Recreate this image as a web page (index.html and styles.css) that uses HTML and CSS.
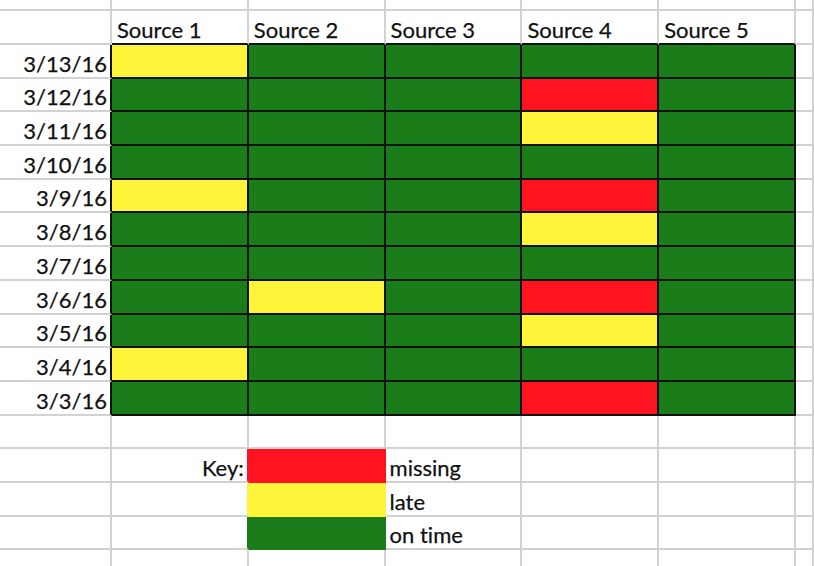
FILE: index.html
```html
<!DOCTYPE html>
<html>
<head>
<meta charset="utf-8">
<link rel="stylesheet" href="styles.css">
</head>
<body>
<div class="sheet">
  <div class="c"></div><div class="c"></div><div class="c"></div><div class="c"></div><div class="c"></div><div class="c"></div><div class="c"></div>

  <div class="c"></div>
  <div class="c hd">Source 1</div>
  <div class="c hd">Source 2</div>
  <div class="c hd">Source 3</div>
  <div class="c hd">Source 4</div>
  <div class="c hd">Source 5</div>
  <div class="c"></div>

  <div class="c dt">3/13/16</div><div class="c d y"></div><div class="c d g"></div><div class="c d g"></div><div class="c d g"></div><div class="c d g"></div><div class="c"></div>
  <div class="c dt">3/12/16</div><div class="c d g"></div><div class="c d g"></div><div class="c d g"></div><div class="c d r"></div><div class="c d g"></div><div class="c"></div>
  <div class="c dt">3/11/16</div><div class="c d g"></div><div class="c d g"></div><div class="c d g"></div><div class="c d y"></div><div class="c d g"></div><div class="c"></div>
  <div class="c dt">3/10/16</div><div class="c d g"></div><div class="c d g"></div><div class="c d g"></div><div class="c d g"></div><div class="c d g"></div><div class="c"></div>
  <div class="c dt">3/9/16</div><div class="c d y"></div><div class="c d g"></div><div class="c d g"></div><div class="c d r"></div><div class="c d g"></div><div class="c"></div>
  <div class="c dt">3/8/16</div><div class="c d g"></div><div class="c d g"></div><div class="c d g"></div><div class="c d y"></div><div class="c d g"></div><div class="c"></div>
  <div class="c dt">3/7/16</div><div class="c d g"></div><div class="c d g"></div><div class="c d g"></div><div class="c d g"></div><div class="c d g"></div><div class="c"></div>
  <div class="c dt">3/6/16</div><div class="c d g"></div><div class="c d y"></div><div class="c d g"></div><div class="c d r"></div><div class="c d g"></div><div class="c"></div>
  <div class="c dt">3/5/16</div><div class="c d g"></div><div class="c d g"></div><div class="c d g"></div><div class="c d y"></div><div class="c d g"></div><div class="c"></div>
  <div class="c dt">3/4/16</div><div class="c d y"></div><div class="c d g"></div><div class="c d g"></div><div class="c d g"></div><div class="c d g"></div><div class="c"></div>
  <div class="c dt">3/3/16</div><div class="c d g"></div><div class="c d g"></div><div class="c d g"></div><div class="c d r"></div><div class="c d g"></div><div class="c"></div>

  <div class="c"></div><div class="c"></div><div class="c"></div><div class="c"></div><div class="c"></div><div class="c"></div><div class="c"></div>

  <div class="c"></div><div class="c key kr-r">Key:</div><div class="c k r"></div><div class="c lg">missing</div><div class="c"></div><div class="c"></div><div class="c"></div>
  <div class="c"></div><div class="c kr-y"></div><div class="c k y"></div><div class="c lg">late</div><div class="c"></div><div class="c"></div><div class="c"></div>
  <div class="c"></div><div class="c kr-g"></div><div class="c k g"></div><div class="c lg">on time</div><div class="c"></div><div class="c"></div><div class="c"></div>

  <div class="c"></div><div class="c"></div><div class="c"></div><div class="c"></div><div class="c"></div><div class="c"></div><div class="c"></div>
</div>
</body>
</html>
```

FILE: styles.css
```css
html, body {
  margin: 0;
  padding: 0;
  background: #ffffff;
}

.sheet {
  display: grid;
  grid-template-columns: 112px repeat(5, 136.8px) 1fr;
  grid-template-rows: 11px 34px repeat(16, 33.7px);
  width: 814px;
  height: 566px;
  overflow: hidden;
  font-family: "Lato", "Open Sans", sans-serif;
  font-size: 22px;
  line-height: 24px;
  font-variant-ligatures: none;
  color: #111111;
  -webkit-text-stroke: 0.25px #111111;
}

.c {
  box-sizing: border-box;
  border-right: 2px solid #d2d2d2;
  border-bottom: 2px solid #d2d2d2;
  display: flex;
  align-items: flex-end;
  padding-bottom: 1px;
  white-space: nowrap;
}

.hd {
  padding-left: 5px;
  border-bottom-color: #111111;
}

.dt {
  justify-content: flex-end;
  padding-right: 3px;
  border-right-color: #111111;
}

.key {
  justify-content: flex-end;
  padding-right: 3px;
}

.lg {
  padding-left: 4px;
}

.d {
  border-color: #111111;
}

.g { background: #1a7d1a; }
.y { background: #fff43a; }
.r { background: #fd1420; }

.k.g { border-color: #1a7d1a; }
.k.y { border-color: #fff43a; }
.k.r { border-color: #fd1420; }

.kr-r { border-right-color: #fd1420; }
.kr-y { border-right-color: #fff43a; }
.kr-g { border-right-color: #1a7d1a; }
```
